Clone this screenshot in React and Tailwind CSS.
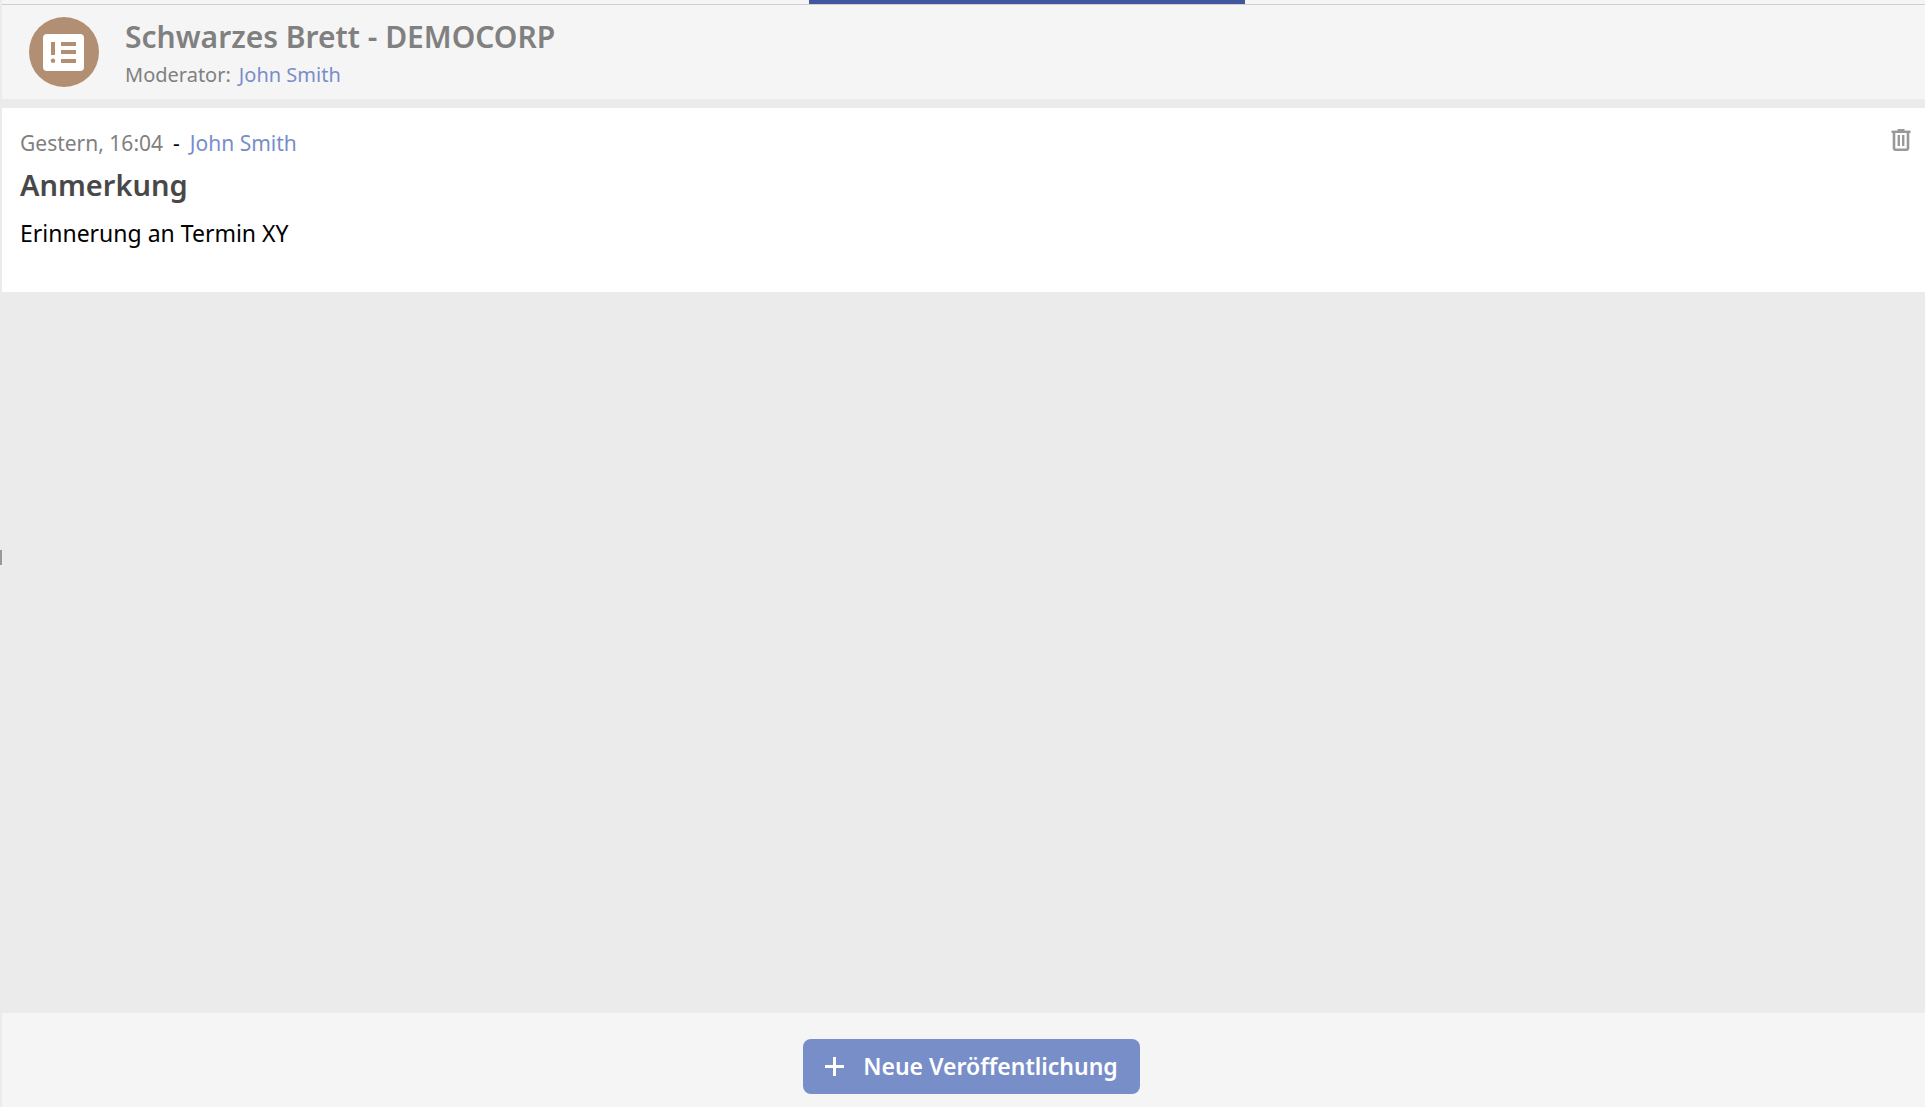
import React from 'react';

const BoardIcon = () => (
    <svg viewBox="0 0 70 70" className="size-[70px] shrink-0" aria-hidden="true">
        <circle cx="35" cy="35" r="35" fill="#b28e72" />
        <rect x="14" y="17" width="41" height="37" rx="4" fill="#fff" />
        <g fill="#b28e72">
            <rect x="22" y="25" width="4" height="13" />
            <circle cx="24" cy="43.7" r="2.2" />
            <rect x="32" y="25" width="15" height="4" />
            <rect x="32" y="33" width="15" height="4" />
            <rect x="32" y="42" width="15" height="4" />
        </g>
    </svg>
);

const TrashIcon = () => (
    <svg viewBox="0 0 20 22" className="h-[22px] w-5" fill="none" stroke="#999" aria-hidden="true">
        <path d="M0.5 2.8h19" strokeWidth="2.4" />
        <path d="M6.5 1h7" strokeWidth="2" />
        <path d="M3 3v16q0 1.7 1.7 1.7h10.6q1.7 0 1.7-1.7V3" strokeWidth="2.6" />
        <path d="M7.8 6v11M12.2 6v11" strokeWidth="2.4" />
    </svg>
);

const PlusIcon = () => (
    <svg viewBox="0 0 20 20" className="size-5" fill="none" stroke="#fff" strokeWidth="3" aria-hidden="true">
        <path d="M9.5 0v19M0 9.5h19" />
    </svg>
);

const posts = [
    { id: 1, date: 'Gestern, 16:04', author: 'John Smith', title: 'Anmerkung', text: 'Erinnerung an Termin XY' },
];

const Post = ({ post }) => (
    <article className="flex items-start justify-between bg-white pt-[21px] pr-[14px] pb-[42px] pl-[18px]">
        <div>
            <div className="flex gap-[10px] text-[21px] leading-7 text-[#808080]">
                <span>{post.date}</span>
                <span className="text-black">-</span>
                <a href="#" className="text-[#788ec8]">{post.author}</a>
            </div>
            <h2 className="mt-2 text-[29px] leading-10 font-semibold text-[#484848]">{post.title}</h2>
            <p className="mt-[11px] text-[23px] leading-[34px] text-black">{post.text}</p>
        </div>
        <button type="button" aria-label="Löschen">
            <TrashIcon />
        </button>
    </article>
);

const App = () => {
    return (
        <div className="flex min-h-screen bg-[#ebebeb] font-['Noto_Sans',sans-serif]">
            {/* splitter */}
            <div className="flex w-[2px] shrink-0 items-center pt-2">
                <div className="h-[15px] w-full bg-[#999]" />
            </div>

            <div className="flex flex-1 flex-col">
                {/* active tab marker */}
                <div className="grid h-[5px] grid-cols-[807fr_436fr_680fr] border-b border-[#cfcfcf] bg-[#f5f5f5]">
                    <div className="col-start-2 bg-[#4057a0]" />
                </div>

                <header className="flex items-start gap-[26px] bg-[#f5f5f5] pt-3 pb-[6px] pl-[27px]">
                    <BoardIcon />
                    <div>
                        <h1 className="text-[30px] leading-10 font-semibold text-[#808080]">Schwarzes Brett - DEMOCORP</h1>
                        <div className="flex gap-2 text-[20px] leading-9 text-[#808080]">
                            <span>Moderator:</span>
                            <a href="#" className="text-[#788ec8]">John Smith</a>
                        </div>
                    </div>
                </header>

                <main className="flex-1 pt-[9px]">
                    {posts.map((post) => (
                        <Post key={post.id} post={post} />
                    ))}
                </main>

                <footer className="flex justify-center bg-[#f5f5f5] pt-[26px] pb-[13px] pl-4">
                    <button
                        type="button"
                        className="flex items-center gap-[18px] rounded-lg bg-[#788ec8] px-[22px] py-[10px] text-[23px] leading-[35px] font-semibold text-white"
                    >
                        <PlusIcon />
                        Neue Veröffentlichung
                    </button>
                </footer>
            </div>
        </div>
    );
};

export default App;
